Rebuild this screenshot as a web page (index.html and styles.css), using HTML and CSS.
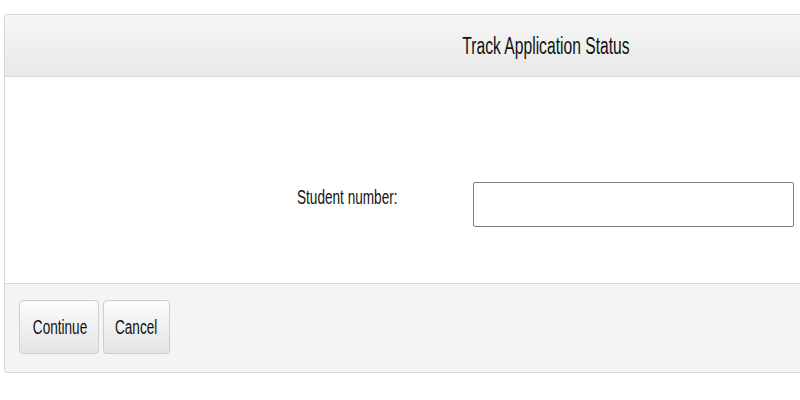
FILE: index.html
```html
<!DOCTYPE html>
<html lang="en">
<head>
    <meta charset="UTF-8">
    <title>Track Application Status</title>
    <link rel="stylesheet" href="styles.css">
</head>
<body>

<!-- Track status panel -->
<div class="panel">
    <div class="panel-head">
        <h2><span class="squeeze">Track Application Status</span></h2>
    </div>

    <div class="panel-body">
        <label class="field-label" for="student-number"><span class="squeeze">Student number:</span></label>
        <input type="text" id="student-number" class="field-input">
    </div>

    <div class="panel-foot">
        <button class="btn btn-continue"><span class="squeeze">Continue</span></button>
        <button class="btn btn-cancel"><span class="squeeze">Cancel</span></button>
    </div>
</div>

</body>
</html>
```

FILE: styles.css
```css
/* General */
* {
    margin: 0;
    padding: 0;
    box-sizing: border-box;
    font-family: "Liberation Sans", Arial, sans-serif;
}

body {
    background: #fff;
    color: #111;
}

/* text in this page is drawn narrow */
.squeeze {
    display: inline-block;
    transform: scaleX(0.68);
    white-space: nowrap;
}

.panel {
    width: 796px;
    margin: 14px 0 0 4px;
    border: 1px solid #d6d6d6;
    border-right: none;
    border-radius: 4px 0 0 4px;
}

.panel-head {
    height: 62px;
    background: linear-gradient(#f6f6f6, #e9e9e9);
    border-bottom: 1px solid #d6d6d6;
    border-radius: 4px 0 0 0;
    padding-left: 286px;
    text-align: center;
}

.panel-head h2 {
    font-weight: normal;
    font-size: 23px;
    line-height: 62px;
}

.panel-head h2 .squeeze {
    transform-origin: center;
}

.panel-body {
    height: 206px;
    display: flex;
    align-items: flex-start;
    padding: 105px 0 0 292px;
}

.field-label {
    width: 176px;
    font-size: 20px;
    line-height: 24px;
    padding-top: 3px;
}

.field-label .squeeze {
    transform-origin: left;
}

.field-input {
    width: 321px;
    height: 45px;
    border: 1px solid #7c7c8c;
    border-radius: 2px;
    background: #fff;
}

.panel-foot {
    height: 89px;
    background: #f4f4f4;
    border-top: 1px solid #d6d6d6;
    border-radius: 0 0 0 4px;
    display: flex;
    gap: 4px;
    padding: 16px 0 0 14px;
    align-items: flex-start;
}

.btn {
    height: 54px;
    font-size: 20px;
    color: #111;
    background: linear-gradient(#fcfcfc, #e4e4e4);
    border: 1px solid #cdcdcd;
    border-radius: 4px;
    overflow: hidden;
}

.btn .squeeze {
    transform-origin: center;
}

.btn-continue {
    width: 80px;
}

.btn-cancel {
    width: 67px;
}
```
